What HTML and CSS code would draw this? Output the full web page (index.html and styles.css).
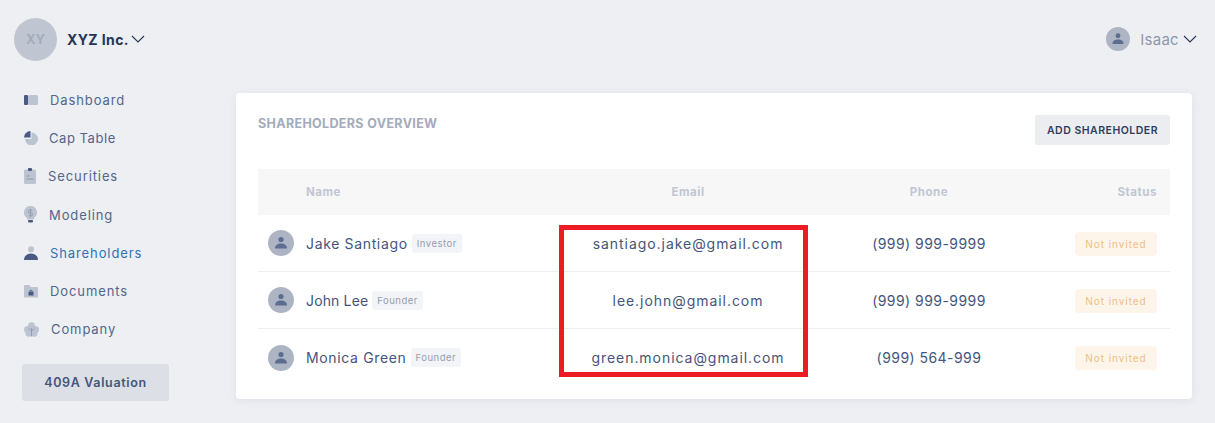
FILE: index.html
```html
<!DOCTYPE html>
<html lang="en">
<head>
    <meta charset="UTF-8">
    <title>Shareholders</title>
    <link rel="stylesheet" href="styles.css">
</head>
<body>
    <header class="topbar">
        <div class="company">
            <div class="company-logo">XY</div>
            <span class="company-name">XYZ Inc.</span>
            <svg class="chevron" viewBox="0 0 14 8"><path d="M1 1l6 6 6-6"/></svg>
        </div>
        <div class="user">
            <svg class="avatar avatar-small" viewBox="0 0 26 26"><circle cx="13" cy="13" r="13" class="avatar-bg"/><circle cx="13" cy="9.500" r="2.600" class="avatar-fg"/><path d="M7 18.500c0-3.500 2.600-5 6-5s6 1.500 6 5z" class="avatar-fg"/></svg>
            <span class="user-name">Isaac</span>
            <svg class="chevron" viewBox="0 0 14 8"><path d="M1 1l6 6 6-6"/></svg>
        </div>
    </header>

    <div class="layout">
        <nav class="sidebar">
            <a class="nav-item">
                <svg class="nav-icon" viewBox="0 0 14 14"><rect x="4" y="2" width="10" height="10" rx="1.500" class="light"/><rect x="0" y="2" width="4" height="10" rx="1" class="dark"/></svg>
                <span>Dashboard</span>
            </a>
            <a class="nav-item nav-cap">
                <svg class="nav-icon" viewBox="0 0 14 14"><path d="M7.500 1.500a6.500 6.500 0 1 1-6.500 6.500h6.500z" class="light"/><path d="M6.500 0v6.500H0A6.500 6.500 0 0 1 6.500 0z" class="dark"/></svg>
                <span>Cap Table</span>
            </a>
            <a class="nav-item">
                <svg class="nav-icon nav-icon-narrow" viewBox="0 0 12 16"><rect x="0" y="1.500" width="12" height="14.500" rx="1.500" class="light"/><rect x="4" y="0" width="4" height="3" rx="1" class="dark"/><path d="M2.500 7.500h3v1h-3zM2.500 10.500h7v1h-7z" class="mid"/></svg>
                <span>Securities</span>
            </a>
            <a class="nav-item nav-modeling">
                <svg class="nav-icon nav-icon-bulb" viewBox="0 0 13 17"><path d="M6.500 0a6.500 6.500 0 0 1 3.500 12V13.500H3V12A6.500 6.500 0 0 1 6.500 0z" class="light"/><path d="M8.300 4.200H5.800a1.300 1.300 0 0 0 0 2.800h1.400a1.300 1.300 0 0 1 0 2.800H4.700M6.500 3v8" class="mid-line"/><rect x="4" y="14" width="5" height="2.500" rx="1" class="dark"/></svg>
                <span>Modeling</span>
            </a>
            <a class="nav-item nav-active">
                <svg class="nav-icon" viewBox="0 0 14 14"><circle cx="7" cy="3.200" r="3" class="light"/><path d="M0 14c0-4 3-6.500 7-6.500s7 2.500 7 6.500z" class="dark"/></svg>
                <span>Shareholders</span>
            </a>
            <a class="nav-item">
                <svg class="nav-icon" viewBox="0 0 14 14"><path d="M0 2C0 1.500 .5 1 1 1h4l2 2h6c.5 0 1 .5 1 1v8.500c0 .5-.5 1-1 1H1c-.5 0-1-.5-1-1z" class="light"/><rect x="4.500" y="7.500" width="5" height="4" rx=".5" class="dark"/><path d="M5.700 7.500a1.300 1.300 0 0 1 2.600 0" class="lock"/></svg>
                <span>Documents</span>
            </a>
            <a class="nav-item">
                <svg class="nav-icon nav-icon-wide" viewBox="0 0 15 15"><circle cx="7.500" cy="3.800" r="3.500" class="light"/><circle cx="3.500" cy="7.500" r="3.500" class="light"/><circle cx="11.500" cy="7.500" r="3.500" class="light"/><circle cx="4.800" cy="11.500" r="3.300" class="light"/><circle cx="10.200" cy="11.500" r="3.300" class="light"/><path d="M7.500 6v8.500M4.500 6.500l3 2.500 3-2.500" class="mid-line"/></svg>
                <span>Company</span>
            </a>
            <button class="valuation-btn">409A Valuation</button>
        </nav>

        <main class="card">
            <div class="card-head">
                <h2>SHAREHOLDERS OVERVIEW</h2>
                <button class="add-btn">ADD SHAREHOLDER</button>
            </div>
            <div class="table">
                <div class="row table-head">
                    <div class="col-name">Name</div>
                    <div class="col-center">Email</div>
                    <div class="col-center">Phone</div>
                    <div class="col-status">Status</div>
                </div>
                <div class="row">
                    <div class="col-person">
                        <svg class="avatar" viewBox="0 0 26 26"><circle cx="13" cy="13" r="13" class="avatar-bg"/><circle cx="13" cy="9.500" r="2.600" class="avatar-fg"/><path d="M7 18.500c0-3.500 2.600-5 6-5s6 1.500 6 5z" class="avatar-fg"/></svg>
                        <span class="person-name">Jake Santiago</span>
                        <span class="role">Investor</span>
                    </div>
                    <div class="col-center col-email">santiago.jake@gmail.com</div>
                    <div class="col-center">(999) 999-9999</div>
                    <div class="col-status"><span class="status">Not invited</span></div>
                </div>
                <div class="row">
                    <div class="col-person">
                        <svg class="avatar" viewBox="0 0 26 26"><circle cx="13" cy="13" r="13" class="avatar-bg"/><circle cx="13" cy="9.500" r="2.600" class="avatar-fg"/><path d="M7 18.500c0-3.500 2.600-5 6-5s6 1.500 6 5z" class="avatar-fg"/></svg>
                        <span class="person-name person-name-short">John Lee</span>
                        <span class="role">Founder</span>
                    </div>
                    <div class="col-center col-email">lee.john@gmail.com</div>
                    <div class="col-center">(999) 999-9999</div>
                    <div class="col-status"><span class="status">Not invited</span></div>
                </div>
                <div class="row">
                    <div class="col-person">
                        <svg class="avatar" viewBox="0 0 26 26"><circle cx="13" cy="13" r="13" class="avatar-bg"/><circle cx="13" cy="9.500" r="2.600" class="avatar-fg"/><path d="M7 18.500c0-3.500 2.600-5 6-5s6 1.500 6 5z" class="avatar-fg"/></svg>
                        <span class="person-name">Monica Green</span>
                        <span class="role">Founder</span>
                    </div>
                    <div class="col-center col-email">green.monica@gmail.com</div>
                    <div class="col-center">(999) 564-999</div>
                    <div class="col-status"><span class="status">Not invited</span></div>
                </div>
            </div>
            <div class="highlight"></div>
        </main>
    </div>
</body>
</html>
```

FILE: styles.css
```css
* {
    box-sizing: border-box;
}
body {
    margin: 0;
    height: 423px;
    overflow: hidden;
    background: #edeff3;
    font-family: Inter, sans-serif;
    color: #44557b;
}
.topbar {
    display: flex;
    justify-content: space-between;
    align-items: center;
    height: 78px;
    padding: 0 18px 0 14px;
}
.company, .user {
    display: flex;
    align-items: center;
}
.company-logo {
    display: flex;
    align-items: center;
    justify-content: center;
    width: 43px;
    height: 43px;
    border-radius: 50%;
    background: #bfc6d2;
    color: #a4acbc;
    font-size: 13px;
    font-weight: 700;
}
.company-name {
    margin-left: 10px;
    margin-right: 2px;
    font-size: 14px;
    font-weight: 700;
    letter-spacing: 0.4px;
    color: #253658;
}
.chevron {
    width: 14px;
    height: 8px;
    fill: none;
    stroke: #253658;
    stroke-width: 1.100;
}
.user-name {
    margin: 0 4px 0 10px;
    font-size: 15px;
    letter-spacing: 0.3px;
    color: #8d97ac;
}
.avatar {
    width: 26px;
    height: 26px;
    flex: none;
}
.avatar-small {
    width: 24px;
    height: 24px;
}
.avatar-bg {
    fill: #adb5c5;
}
.avatar-fg {
    fill: #5d6d8f;
}

.layout {
    display: flex;
}
.sidebar {
    display: flex;
    flex-direction: column;
    width: 236px;
    padding: 3px 0 0 24px;
}
.nav-item {
    display: flex;
    align-items: center;
    height: 38.200px;
    font-size: 13px;
    letter-spacing: 0.9px;
    color: #53658a;
}
.nav-item span {
    margin-left: 12px;
}
.nav-cap span {
    margin-left: 11px;
    letter-spacing: 0.55px;
}
.nav-active {
    color: #2f73b5;
}
.nav-icon {
    width: 14px;
    height: 14px;
    flex: none;
}
.nav-icon-narrow {
    width: 12px;
    height: 16px;
}
.nav-icon-bulb {
    width: 13px;
    height: 17px;
}
.nav-icon-wide {
    width: 15px;
    height: 15px;
}
.light {
    fill: #bcc3d1;
}
.dark {
    fill: #4a5a82;
}
.mid {
    fill: #8f99ae;
}
.mid-line {
    fill: none;
    stroke: #949eb2;
    stroke-width: 1;
}
.lock {
    fill: none;
    stroke: #4a5a82;
    stroke-width: 0.800;
}
.valuation-btn {
    width: 147px;
    height: 37px;
    margin: 16px 0 0 -2px;
    border: none;
    border-radius: 3px;
    background: #dcdfe6;
    color: #44557b;
    font-family: inherit;
    font-size: 12.500px;
    font-weight: 600;
    letter-spacing: 0.65px;
}

.card {
    position: relative;
    width: 956px;
    height: 306px;
    margin-top: 15px;
    padding: 22px;
    background: #fff;
    border-radius: 4px;
    box-shadow: 0 2px 8px rgba(60, 70, 100, 0.08);
}
.card-head {
    display: flex;
    justify-content: space-between;
    align-items: flex-start;
    height: 54px;
}
.card-head h2 {
    margin: 0;
    font-size: 12.500px;
    font-weight: 700;
    line-height: 18px;
    letter-spacing: 0.35px;
    color: #a3abbc;
}
.add-btn {
    width: 135px;
    height: 30px;
    border: none;
    border-radius: 3px;
    background: #ebedf0;
    color: #2c3d60;
    font-family: inherit;
    font-size: 10.500px;
    font-weight: 600;
    letter-spacing: 0.5px;
}
.row {
    display: grid;
    grid-template-columns: 300px 260px 222px 130px;
    align-items: center;
    height: 57px;
    border-bottom: 1px solid #eeeff2;
    font-size: 14px;
    letter-spacing: 0.45px;
}
.row:last-child {
    border-bottom: none;
}
.table-head {
    height: 46px;
    border-bottom: none;
    background: #f7f7f8;
    color: #c1c6d2;
    font-size: 11.500px;
    font-weight: 700;
    letter-spacing: 0.55px;
}
.col-name {
    padding-left: 48px;
}
.col-center {
    text-align: center;
}
.col-email {
    letter-spacing: 0.95px;
}
.col-status {
    padding-right: 13px;
    text-align: right;
}
.col-person {
    display: flex;
    align-items: center;
    padding-left: 10px;
}
.person-name {
    margin: 0 4px 0 12px;
    letter-spacing: 0.65px;
    white-space: nowrap;
}
.person-name-short {
    letter-spacing: 0.15px;
}
.role {
    padding: 2px 5px;
    border-radius: 3px;
    background: #f3f4f7;
    color: #939db1;
    font-size: 9.500px;
    line-height: 15px;
    letter-spacing: 0.5px;
}
.status {
    display: block;
    width: 82px;
    margin: 1px 0 0 auto;
    border-radius: 4px;
    background: #fef5ea;
    color: #ecbf83;
    font-size: 10px;
    line-height: 24px;
    letter-spacing: 0.95px;
    text-align: center;
}
/* red annotation box drawn over the email column */
.highlight {
    position: absolute;
    left: 323px;
    top: 132px;
    width: 249px;
    height: 152px;
    border: 5px solid #ed1c24;
}
```
